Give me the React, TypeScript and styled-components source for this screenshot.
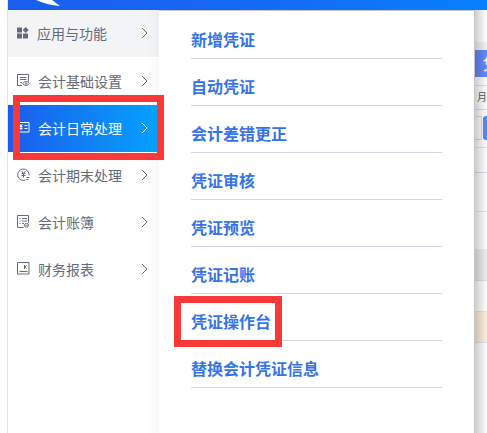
import React from 'react';
import styled, { createGlobalStyle, css } from 'styled-components';

const Global = createGlobalStyle`
  * { box-sizing: border-box; }
  body { margin: 0; background: #fff; font-family: "Noto Sans CJK SC", sans-serif; }
  button { font-family: inherit; }
  ul { list-style: none; margin: 0; padding: 0; }
`;

const Page = styled.div`
  min-height: 100vh;
  margin-left: 7px;
  border-left: 1px solid #e4e5e8;
  display: flex;
  flex-direction: column;
  overflow: hidden;
`;

const Header = styled.header`
  height: 10px;
  background: linear-gradient(90deg, #1a5eec, #1669f3 50%, #0880fa);
  svg { display: block; margin-left: 24px; }
`;

const Body = styled.div`
  flex: 1;
  display: flex;
`;

const Sidebar = styled.nav`
  width: 151px;
  flex: none;
  color: #626b7c;
  background: linear-gradient(90deg, #fff 92%, #f8f8f9);
`;

const SideItem = styled.button<{ $active?: boolean; $head?: boolean }>`
  width: 100%;
  height: 47px;
  border: 0;
  padding: 0 8px 2px 9px;
  display: flex;
  align-items: center;
  gap: 8px;
  background: transparent;
  color: inherit;
  font-size: 14px;
  line-height: 20px;
  text-align: left;
  white-space: nowrap;
  svg { flex: none; }
  ${p => p.$head && css`
    height: 48px;
    background: linear-gradient(90deg, #f3f4f6 92%, #eeeff1);
    border-bottom: 1px solid #fff;
  `}
  ${p => p.$active && css`
    color: #fff;
    background: linear-gradient(90deg, #1c5cec, #04a2ff);
  `}
`;

const SideLabel = styled.span`
  flex: 1;
`;

const Entry = styled.li`
  position: relative;
`;

const SideMark = styled.span`
  position: absolute;
  z-index: 2;
  inset: -10px -5px -8px 5px;
  border: 7px solid #fb3838;
  pointer-events: none;
`;

const Panel = styled.section`
  flex: 1;
  padding: 1px 32px 0;
  background: #fff;
  border-top: 1px solid #c8c8ca;
  border-right: 1px solid #c4c4c6;
`;

const MenuEntry = styled(Entry)`
  border-bottom: 1px solid #d5d4e5;
`;

const MenuLink = styled.a`
  display: block;
  padding: 15px 0 7px;
  color: #3673e8;
  font-size: 16px;
  font-weight: 700;
  line-height: 24px;
  text-decoration: none;
  white-space: nowrap;
`;

const MenuMark = styled.span`
  position: absolute;
  z-index: 2;
  top: 2px;
  left: -17px;
  width: 108px;
  height: 51px;
  border: 7px solid #fb3838;
  pointer-events: none;
`;

const Behind = styled.aside`
  position: relative;
  width: 12px;
  flex: none;
  overflow: hidden;
  background: #fdfdfd;
  color: #555;
  &::after {
    content: "";
    position: absolute;
    inset: 0;
    background: linear-gradient(90deg, rgba(0, 0, 0, 0.19), rgba(0, 0, 0, 0));
  }
`;

const Strip = styled.div<{ $h: number; $bg?: string; $line?: string }>`
  height: ${p => p.$h}px;
  background: ${p => p.$bg || 'transparent'};
  border-bottom: ${p => (p.$line ? `1px solid ${p.$line}` : '0')};
  overflow: hidden;
  white-space: nowrap;
  font-size: 10px;
  line-height: 22px;
  padding-left: 2px;
`;

const Tab = styled(Strip)`
  color: #fff;
  font-size: 16px;
  line-height: 27px;
  padding-left: 8px;
`;

const Field = styled(Strip)`
  padding: 6px 0 7px;
  display: flex;
  &::before {
    content: "";
    width: 6px;
    border: 1px solid #ddd;
    border-left: 0;
  }
  &::after {
    content: "";
    flex: 1;
    background: #5d86f7;
    border-radius: 3px 0 0 3px;
    margin-left: 1px;
  }
`;

type IconName = 'apps' | 'settings' | 'daily' | 'period' | 'books' | 'report';

const Glyph = ({ name }: { name: IconName }) => {
  if (name === 'apps') {
    return (
      <svg width="12" height="12" viewBox="0 0 12 12" fill="currentColor" aria-hidden="true">
        <path d="M0 .5h5v5H0zM0 6.5h5v5H0zM6 6.5h5v5H6zM8.7 0l3 3-3 3-3-3z" />
      </svg>
    );
  }
  return (
    <svg width="13" height="13" viewBox="0 0 13 13" fill="none" stroke="currentColor" strokeWidth="1" aria-hidden="true">
      {name === 'settings' && (
        <>
          <path d="M5 11.5H.5V.5h11v7M3 3.5h6.500M3 5.500h6.500M3 8.500h2" />
          <path d="M5.500 9.500q3.500-4 7 0q-3.500 4-7 0z" />
          <circle cx="9" cy="9.5" r=".7" />
        </>
      )}
      {name === 'daily' && (
        <>
          <path d="M.5 1.5h11.500v9.500H.5z" />
          <path d="M2.5 3l1.500 2 1.500-2M4 5v4M2.500 5.500h3M2.500 7.500h3M7.500 4.500H10.500M7.500 7.500H10.500" />
        </>
      )}
      {name === 'period' && (
        <>
          <path d="M8.500 12A5.700 5.700 0 1 1 12 7.500M9.500 9.500h3M9.500 11.500h2" />
          <path d="M4.500 3l2 2.500 2-2.500M6.500 5.500V9.500M4.500 5.500h4M4.500 7.500h4" />
        </>
      )}
      {name === 'books' && (
        <>
          <path d="M6.500 12.500h-6V.5h11v7.500M2.500 3.500h1M5 3.500h5M2.500 6h1M5 6h5M2.500 8.500h1M5 8.500h2" />
          <circle cx="9.500" cy="10.300" r="2" />
          <path d="M8.500 10.300h2" />
        </>
      )}
      {name === 'report' && (
        <>
          <path d="M.5.5h11.500v11.500H.5zM2.500 9.500h8" />
          <path d="M7.500 3v4M9.500 3.500L8 5l1.500 1.500" />
        </>
      )}
    </svg>
  );
};

const Chevron = () => (
  <svg width="12" height="12" viewBox="0 0 12 12" fill="none" stroke="currentColor" strokeWidth="1" aria-hidden="true">
    <path d="M3 1l5 5-5 5" />
  </svg>
);

const sections: { name: IconName; label: string; active?: boolean }[] = [
  { name: 'apps', label: '应用与功能' },
  { name: 'settings', label: '会计基础设置' },
  { name: 'daily', label: '会计日常处理', active: true },
  { name: 'period', label: '会计期末处理' },
  { name: 'books', label: '会计账簿' },
  { name: 'report', label: '财务报表' },
];

const links = ['新增凭证', '自动凭证', '会计差错更正', '凭证审核', '凭证预览', '凭证记账', '凭证操作台', '替换会计凭证信息'];

export default function App() {
  return (
    <>
      <Global />
      <Page>
        <Header>
          <svg width="32" height="8" viewBox="0 0 32 8" aria-hidden="true">
            <path d="M4 0h16l8 6q-13-1-24-6z" fill="#fff" />
          </svg>
        </Header>
        <Body>
          <Sidebar>
            <ul>
              {sections.map(s => (
                <Entry key={s.name}>
                  <SideItem type="button" $active={s.active} $head={s.name === 'apps'}>
                    <Glyph name={s.name} />
                    <SideLabel>{s.label}</SideLabel>
                    <Chevron />
                  </SideItem>
                  {s.active && <SideMark />}
                </Entry>
              ))}
            </ul>
          </Sidebar>
          <Panel>
            <ul>
              {links.map(label => (
                <MenuEntry key={label}>
                  <MenuLink href="#">{label}</MenuLink>
                  {label === '凭证操作台' && <MenuMark />}
                </MenuEntry>
              ))}
            </ul>
          </Panel>
          <Behind>
            <Strip $h={32} $bg="#fff" />
            <Strip $h={8} $bg="#f1f1f1" />
            <Tab $h={27} $bg="#6389f8">凭</Tab>
            <Strip $h={9} $line="#e2e2e6" />
            <Strip $h={24} $line="#dcdce0">月</Strip>
            <Field $h={38} $line="#e2e2e6" />
            <Strip $h={25} $line="#d8d8e8" />
            <Strip $h={39} $line="#e4e4e4" />
            <Strip $h={37} />
            <Strip $h={32} $bg="#ececec" $line="#e0e0e0" />
            <Strip $h={31} $line="#e4e2ea" />
            <Strip $h={31} $bg="#fdf0de" $line="#e4e2ea" />
          </Behind>
        </Body>
      </Page>
    </>
  );
}
